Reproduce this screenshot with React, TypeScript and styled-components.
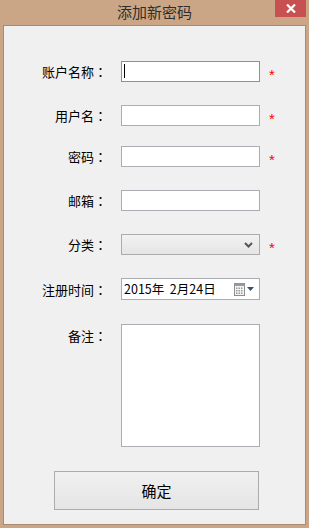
import React from 'react';
import styled, { createGlobalStyle } from 'styled-components';

const Global = createGlobalStyle`
  html, body {
    margin: 0;
    padding: 0;
    background: #cba686;
  }
  * { box-sizing: border-box; }
`;

const FONT = `"Noto Sans CJK SC", "Noto Sans", sans-serif`;

const Window = styled.div`
  width: 309px;
  height: 528px;
  background: #cba686;
  display: flex;
  flex-direction: column;
  font-family: ${FONT};
`;

const TitleBar = styled.div`
  position: relative;
  height: 25px;
  display: flex;
  align-items: center;
  justify-content: center;
  flex-shrink: 0;
`;

const Title = styled.div`
  font-size: 15px;
  color: #2e2e2e;
  line-height: 1;
  margin-top: -2px;
`;

const CloseButton = styled.div`
  position: absolute;
  top: 0;
  right: 3px;
  width: 31px;
  height: 17px;
  background: #c75050;
  display: flex;
  align-items: center;
  justify-content: center;
`;

const Client = styled.div`
  flex: 1;
  margin: 0 3px 3px;
  border: 1px solid #a98c70;
  background: #f0f0f0;
  padding-top: 35px;
  display: flex;
  flex-direction: column;
`;

const Row = styled.div<{ space?: number }>`
  display: flex;
  align-items: center;
  margin-top: ${({ space }) => space ?? 0}px;
`;

const TopRow = styled(Row)`
  align-items: flex-start;
`;

const Label = styled.div`
  width: 103px;
  text-align: right;
  font-size: 13px;
  color: #000;
  line-height: 1;
  margin-right: 14px;
  white-space: nowrap;
`;

/* full-width colon sits centred in its cell, as in the original UI font */
const Colon = styled.span`
  font-family: "Noto Sans CJK JP", "Noto Sans CJK SC", sans-serif;
`;

const TopLabel = styled(Label)`
  margin-top: 5px;
`;

const FieldBox = styled.div<{ focused?: boolean; h?: number }>`
  position: relative;
  width: 139px;
  height: ${({ h }) => h ?? 21}px;
  background: #fff;
  border: 1px solid ${({ focused }) => (focused ? '#569de5' : '#abadb3')};
  display: flex;
  align-items: center;
`;

const Caret = styled.span`
  position: absolute;
  left: 2px;
  top: 2px;
  width: 1px;
  height: 14px;
  background: #000;
`;

const SelectBox = styled(FieldBox)`
  background: linear-gradient(#f2f2f2, #e5e5e5);
  border-color: #acacac;
  justify-content: flex-end;
  padding-right: 6px;
`;

const DateBox = styled(FieldBox)`
  justify-content: space-between;
  padding: 0 5px 0 2px;
`;

const DateText = styled.span`
  font-size: 12.5px;
  color: #000;
  line-height: 1;
  white-space: pre;
`;

const DateIcons = styled.span`
  display: flex;
  align-items: center;
  gap: 2px;
`;

const Required = styled.span`
  margin-left: 9px;
  color: #f00;
  font-family: "Liberation Sans", sans-serif;
  font-size: 15px;
  line-height: 1;
  margin-top: 5px;
`;

const NoteArea = styled.div`
  width: 139px;
  height: 123px;
  background: #fff;
  border: 1px solid #abadb3;
`;

const Submit = styled.button`
  margin: 24px 0 0 50px;
  width: 205px;
  height: 39px;
  border: 1px solid #acacac;
  background: linear-gradient(#f0f0f0, #e5e5e5);
  font-family: ${FONT};
  font-size: 15px;
  color: #000;
  padding: 0;
  cursor: pointer;
`;

const CloseIcon = () => (
  <svg width="10" height="9" viewBox="0 0 10 9">
    <path d="M1 0.5 L9 8.5 M9 0.5 L1 8.5" stroke="#fff" strokeWidth="2.2" />
  </svg>
);

const Chevron = () => (
  <svg width="9" height="6" viewBox="0 0 9 6">
    <path d="M1 1 L4.5 4.5 L8 1" stroke="#555" strokeWidth="2" fill="none" />
  </svg>
);

const CalendarIcon = () => (
  <svg width="11" height="13" viewBox="0 0 11 13">
    <rect x="0.5" y="0.5" width="10" height="12" fill="#f4f4f4" stroke="#8c8c8c" />
    <rect x="0.5" y="0.5" width="10" height="2.5" fill="#9a9a9a" />
    {[0, 1, 2].map((r) =>
      [0, 1, 2].map((c) => (
        <rect key={`${r}-${c}`} x={2 + c * 2.5} y={4.5 + r * 2.5} width="1.5" height="1.5" fill="#9a9a9a" />
      ))
    )}
  </svg>
);

const DropTriangle = () => (
  <svg width="7" height="4" viewBox="0 0 7 4">
    <path d="M0 0 L7 0 L3.5 4 Z" fill="#3d4f6a" />
  </svg>
);

const Star = () => <Required>*</Required>;

const FieldLabel = ({ text }: { text: string }) => (
  <Label>
    {text}
    <Colon>：</Colon>
  </Label>
);

export default function App() {
  return (
    <>
      <Global />
      <Window>
        <TitleBar>
          <Title>添加新密码</Title>
          <CloseButton>
            <CloseIcon />
          </CloseButton>
        </TitleBar>
        <Client>
          <Row>
            <FieldLabel text="账户名称" />
            <FieldBox focused>
              <Caret />
            </FieldBox>
            <Star />
          </Row>
          <Row space={23}>
            <FieldLabel text="用户名" />
            <FieldBox />
            <Star />
          </Row>
          <Row space={20}>
            <FieldLabel text="密码" />
            <FieldBox />
            <Star />
          </Row>
          <Row space={23}>
            <FieldLabel text="邮箱" />
            <FieldBox />
          </Row>
          <Row space={23}>
            <FieldLabel text="分类" />
            <SelectBox>
              <Chevron />
            </SelectBox>
            <Star />
          </Row>
          <Row space={23}>
            <FieldLabel text="注册时间" />
            <DateBox h={22}>
              <DateText>2015年  2月24日</DateText>
              <DateIcons>
                <CalendarIcon />
                <DropTriangle />
              </DateIcons>
            </DateBox>
          </Row>
          <TopRow space={24}>
            <TopLabel as="div">
              备注<Colon>：</Colon>
            </TopLabel>
            <NoteArea />
          </TopRow>
          <Submit>确定</Submit>
        </Client>
      </Window>
    </>
  );
}
